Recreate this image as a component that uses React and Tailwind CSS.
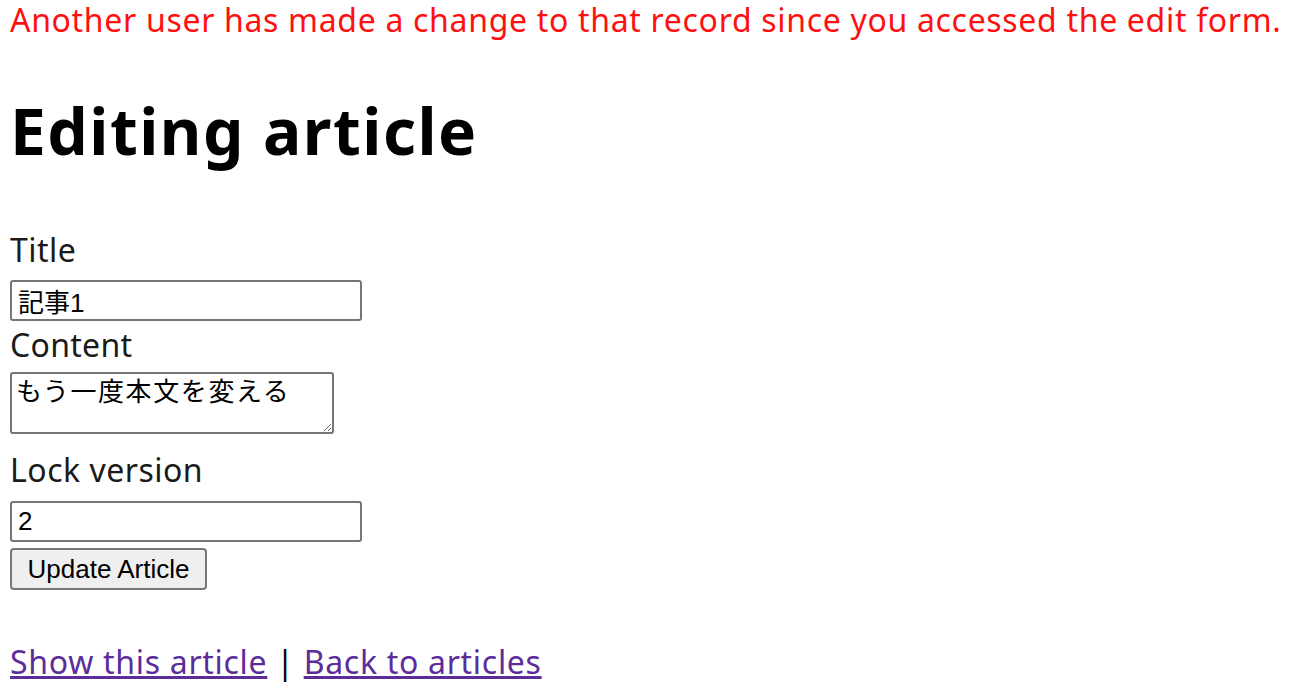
export default function App() {
  return (
    <div className="min-h-screen bg-white pl-[10px] text-black" style={{ fontFamily: '"Noto Sans", "Noto Sans CJK JP", sans-serif' }}>
      <p className="text-[32px] leading-[40px] tracking-[0.68px] text-[#ff1010]">
        Another user has made a change to that record since you accessed the edit form.
      </p>

      <h1 className="mt-[52px] text-[64px] font-bold leading-[77px] tracking-[1.5px]">Editing article</h1>

      <form className="flex flex-col items-start">
        <label className="mt-[61px] text-[32px] leading-[40px] tracking-[0.5px] text-[#1a1a1a]">Title</label>
        <input
          type="text"
          defaultValue="記事1"
          className="mt-[10px] h-[41px] w-[352px] rounded-[3px] border-2 border-[#767676] px-[6px] text-[26px] text-black"
          style={{ fontFamily: '"Liberation Sans", "Noto Sans CJK JP", sans-serif' }}
        />

        <label className="mt-[4px] text-[32px] leading-[40px] tracking-[0.3px] text-[#1a1a1a]">Content</label>
        <textarea
          defaultValue="もう一度本文を変える"
          className="mt-[7px] h-[62px] w-[324px] rounded-[3px] border-2 border-[#767676] px-[4px] py-[1px] text-[26px] leading-[30px] tracking-[1.6px] text-black"
          style={{ fontFamily: '"Noto Sans CJK JP", monospace' }}
        />

        <label className="mt-[16px] text-[32px] leading-[40px] tracking-[0.5px] text-[#1a1a1a]">Lock version</label>
        <input
          type="text"
          defaultValue="2"
          className="mt-[11px] h-[41px] w-[352px] rounded-[3px] border-2 border-[#767676] px-[6px] text-[26px] text-black"
          style={{ fontFamily: '"Liberation Sans", sans-serif' }}
        />

        <button
          type="button"
          className="mt-[6px] h-[42px] w-[197px] rounded-[4px] border-2 border-[#767676] bg-[#efefef] text-[26px] text-black"
          style={{ fontFamily: '"Liberation Sans", sans-serif' }}
        >
          Update Article
        </button>
      </form>

      <div className="mt-[52px] text-[32px] leading-[40px] tracking-[0.7px]">
        <a href="#" className="text-[#5b2d9a] underline">Show this article</a>
        <span> | </span>
        <a href="#" className="text-[#5b2d9a] underline">Back to articles</a>
      </div>
    </div>
  );
}
